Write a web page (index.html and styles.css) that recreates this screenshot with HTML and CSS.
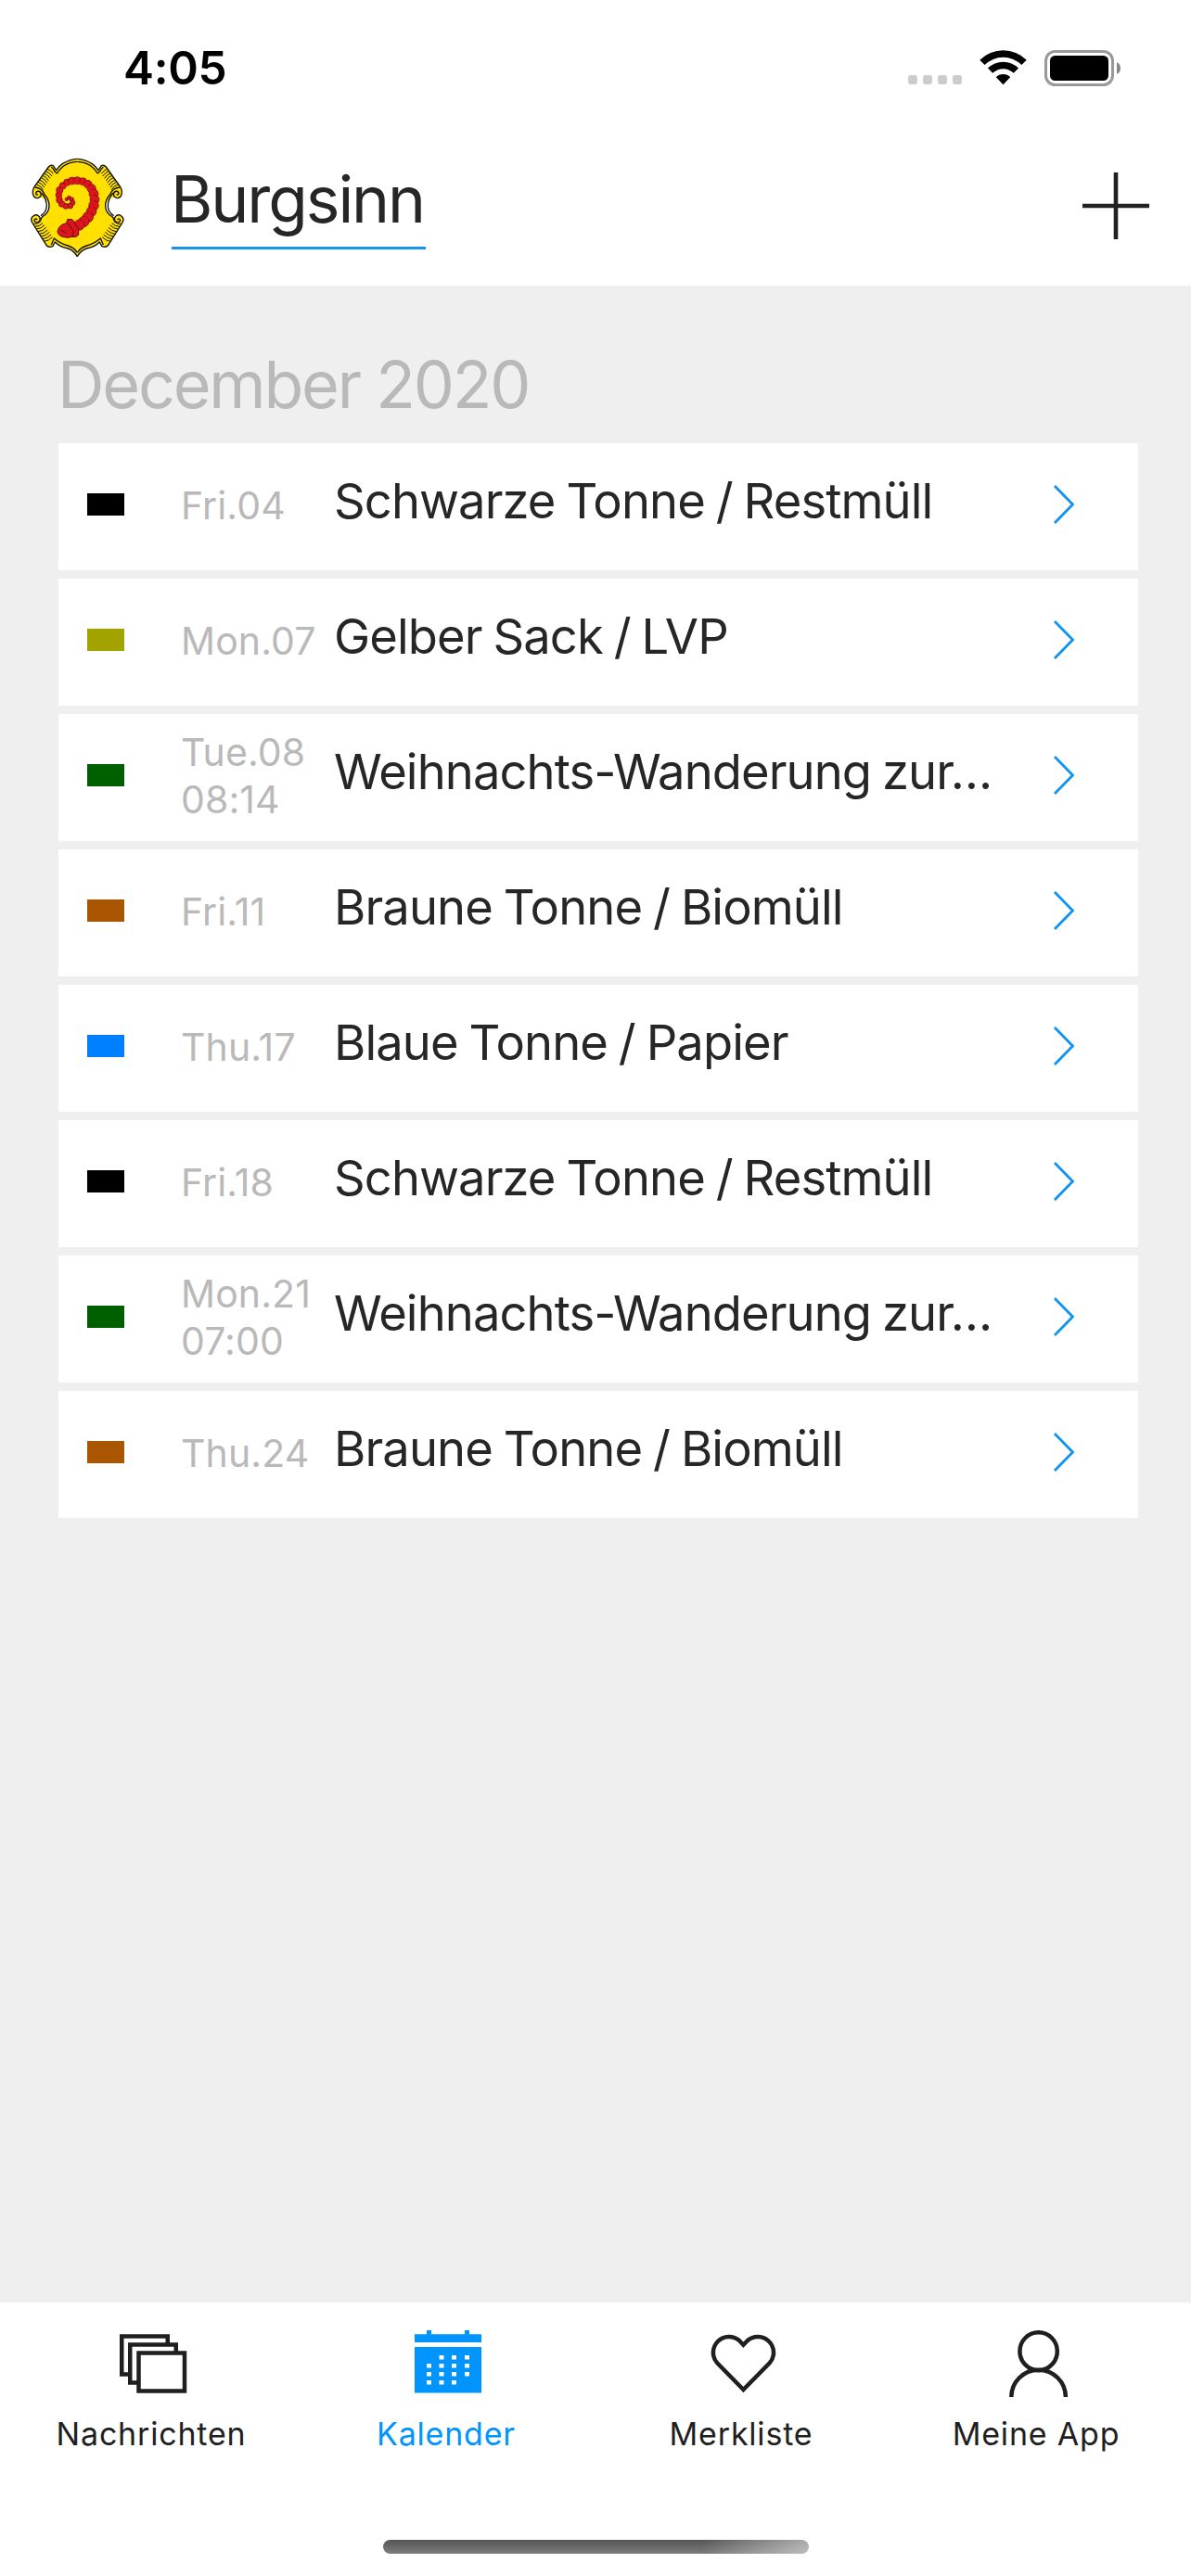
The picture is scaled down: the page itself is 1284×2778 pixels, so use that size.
FILE: index.html
```html
<!DOCTYPE html>
<html lang="de">
<head>
    <meta charset="UTF-8">
    <meta name="viewport" content="width=device-width, initial-scale=1.0">
    <title>Burgsinn - Kalender</title>
    <link rel="stylesheet" href="styles.css">
</head>
<body>

<header class="header">
    <div class="statusbar">
        <span class="time">4:05</span>
        <div class="status-icons">
            <div class="signal"><i></i><i></i><i></i><i></i></div>
            <svg class="wifi" viewBox="0 0 51 38">
                <path d="M0.3 10.8 A35.6 35.6 0 0 1 50.7 10.8 L45.4 16.1 A28.1 28.1 0 0 0 5.6 16.1Z"/>
                <path d="M9 19.6 A23.3 23.3 0 0 1 42 19.6 L36.8 24.8 A16 16 0 0 0 14.2 24.8Z"/>
                <path d="M17.8 29.2 A11 11 0 0 1 33.2 29.2 L25.5 37.3Z"/>
            </svg>
            <svg class="battery" viewBox="0 0 83 39">
                <rect x="1.5" y="1.5" width="72" height="36" rx="10" fill="none" stroke="#999" stroke-width="3"/>
                <rect x="6" y="6" width="63" height="27" rx="5.5"/>
                <path d="M78 13 Q82 15 82 19.5 Q82 24 78 26Z" fill="#888"/>
            </svg>
        </div>
    </div>

    <div class="appbar">
        <!-- Wappen -->
        <svg class="crest" viewBox="0 0 375 375">
            <defs>
                <g id="half">
                    <path d="M190 34 Q165 35 142 50 Q130 58 122 71 L112 56 Q104 52 97 60 L50 126 Q42 142 48 154 Q58 164 69 158 L84 162 Q98 174 98 187 Q97 205 78 219 L68 226 Q56 212 44 222 Q38 232 46 242 L88 310 Q96 322 110 316 L118 303 Q132 318 160 324 Q180 330 190 350Z" fill="#ffe000" stroke="none"/>
                    <path d="M190 34 Q165 35 142 50 Q130 58 122 71 L112 56 Q104 52 97 60 L50 126"/>
                    <path d="M190 43 Q165 44 146 57 Q132 68 124 81 Q116 76 112 66 L106 61"/>
                    <path d="M50 126 C40 146 50 164 64 160 C78 155 73 137 61 139 C52 142 57 153 63 149"/>
                    <path d="M53 126 Q76 128 84 149 Q99 164 99 187 Q98 210 78 220 Q72 226 71 234"/>
                    <path d="M74 144 Q91 164 91 187 Q90 207 72 218"/>
                    <path d="M44 240 C34 222 56 208 67 221 C76 236 60 243 53 237 C47 229 58 225 60 231"/>
                    <path d="M44 240 L88 310 Q96 324 111 316 L118 303 Q132 318 160 324 Q180 331 190 350"/>
                    <path d="M106 312 L115 291 Q134 308 160 315 Q180 321 190 337"/>
                    <path stroke-width="3" d="M93 67 Q104 70 112 82 M88 74 Q100 78 108 90 M83 81 Q95 85 102 97 M78 88 Q90 92 97 105 M73 95 Q86 99 92 112 M68 102 Q80 106 88 120 M63 109 Q76 113 83 127 M58 117 Q72 120 79 134"/>
                    <path stroke-width="3" d="M48 245 Q62 246 72 236 M53 253 Q68 253 78 242 M58 261 Q74 260 84 248 M63 269 Q79 268 89 256 M68 277 Q84 275 94 264 M73 285 Q89 283 100 271 M78 293 Q94 291 105 279 M83 301 Q99 299 109 287"/>
                </g>
            </defs>
            <g fill="none" stroke="#111" stroke-width="4" stroke-linejoin="round">
                <use href="#half"/>
                <use href="#half" transform="translate(380 0) scale(-1 1)"/>
            </g>
            <rect x="186" y="48" width="8" height="268" fill="#ffe000"/>
            <g fill="#dd141d" stroke="#5d0d0d" stroke-width="2">
                <circle cx="155" cy="165" r="5"/>
                <circle cx="163" cy="160" r="6"/>
                <circle cx="172" cy="165" r="7"/>
                <circle cx="175" cy="176" r="8"/>
                <circle cx="167" cy="186" r="9"/>
                <circle cx="153" cy="187" r="9"/>
                <circle cx="140" cy="180" r="10"/>
                <circle cx="132" cy="167" r="10"/>
                <circle cx="130" cy="151" r="10"/>
                <circle cx="133" cy="135" r="11"/>
                <circle cx="143" cy="121" r="11"/>
                <circle cx="157" cy="110" r="11"/>
                <circle cx="173" cy="105" r="12"/>
                <circle cx="190" cy="104" r="12"/>
                <circle cx="208" cy="107" r="12"/>
                <circle cx="224" cy="116" r="13"/>
                <circle cx="236" cy="130" r="14"/>
                <circle cx="243" cy="147" r="15"/>
                <circle cx="246" cy="166" r="15"/>
                <circle cx="243" cy="185" r="16"/>
                <circle cx="236" cy="204" r="16"/>
                <circle cx="225" cy="222" r="17"/>
                <circle cx="211" cy="237" r="17"/>
                <circle cx="196" cy="248" r="17"/>
                <path d="M154 187 C126 183 123 133 158 117 C200 98 238 125 240 165 C239 200 220 228 196 244" fill="none" stroke="#dd141d" stroke-width="7"/>
                <path stroke-width="3" d="M126 268 Q131 246 155 242 L158 230 Q176 226 180 238 Q184 252 194 260 L194 280 Q186 290 174 286 Q160 292 142 286 Q127 282 126 268Z"/>
                <path stroke-width="3" fill="none" d="M155 242 Q168 244 170 258 L178 268 L174 286 M136 264 L154 274"/>
            </g>
        </svg>
        <div class="town">Burgsinn</div>
        <svg class="plus" viewBox="0 0 72 72">
            <path d="M36 0V72M0 36H72" stroke="#222" stroke-width="4.6"/>
        </svg>
    </div>
</header>

<main class="content">
    <h1 class="month">December 2020</h1>

    <div class="list">
        <div class="row">
            <span class="color black"></span>
            <span class="date">Fri.04</span>
            <span class="title">Schwarze Tonne / Restmüll</span>
            <svg class="chevron" viewBox="0 0 22 42"><path d="M1 1L20.5 21L1 41"/></svg>
        </div>
        <div class="row">
            <span class="color yellow"></span>
            <span class="date">Mon.07</span>
            <span class="title">Gelber Sack / LVP</span>
            <svg class="chevron" viewBox="0 0 22 42"><path d="M1 1L20.5 21L1 41"/></svg>
        </div>
        <div class="row">
            <span class="color green"></span>
            <span class="date">Tue.08<br>08:14</span>
            <span class="title">Weihnachts-Wanderung zur…</span>
            <svg class="chevron" viewBox="0 0 22 42"><path d="M1 1L20.5 21L1 41"/></svg>
        </div>
        <div class="row">
            <span class="color brown"></span>
            <span class="date">Fri.11</span>
            <span class="title">Braune Tonne / Biomüll</span>
            <svg class="chevron" viewBox="0 0 22 42"><path d="M1 1L20.5 21L1 41"/></svg>
        </div>
        <div class="row">
            <span class="color blue"></span>
            <span class="date">Thu.17</span>
            <span class="title">Blaue Tonne / Papier</span>
            <svg class="chevron" viewBox="0 0 22 42"><path d="M1 1L20.5 21L1 41"/></svg>
        </div>
        <div class="row">
            <span class="color black"></span>
            <span class="date">Fri.18</span>
            <span class="title">Schwarze Tonne / Restmüll</span>
            <svg class="chevron" viewBox="0 0 22 42"><path d="M1 1L20.5 21L1 41"/></svg>
        </div>
        <div class="row">
            <span class="color green"></span>
            <span class="date">Mon.21<br>07:00</span>
            <span class="title">Weihnachts-Wanderung zur…</span>
            <svg class="chevron" viewBox="0 0 22 42"><path d="M1 1L20.5 21L1 41"/></svg>
        </div>
        <div class="row">
            <span class="color brown"></span>
            <span class="date">Thu.24</span>
            <span class="title">Braune Tonne / Biomüll</span>
            <svg class="chevron" viewBox="0 0 22 42"><path d="M1 1L20.5 21L1 41"/></svg>
        </div>
    </div>
</main>

<footer class="footer">
    <nav class="tabs">
        <a class="tab">
            <svg class="tab-icon" viewBox="0 0 76 76">
                <g fill="#fff" stroke="currentColor" stroke-width="4.5">
                    <rect x="4.25" y="9.5" width="49.5" height="41"/>
                    <rect x="13.25" y="18.5" width="49.5" height="41"/>
                    <rect x="22.5" y="27.5" width="49.5" height="41"/>
                </g>
            </svg>
            <span>Nachrichten</span>
        </a>
        <a class="tab active">
            <svg class="tab-icon" viewBox="0 0 76 76">
                <path fill="currentColor" d="M2 7.3H15V3H20V7.3H56V3H61V7.3H74V16H2ZM2 21H74V70.5H2Z"/>
                <path fill="#fff" d="M28.5 30h5v4.6h-5zM42 30h5v4.6h-5zM56 30h5v4.6h-5zM15 39h5v4.6h-5zM28.5 39h5v4.6h-5zM42 39h5v4.6h-5zM56 39h5v4.6h-5zM15 48h5v4.6h-5zM28.5 48h5v4.6h-5zM42 48h5v4.6h-5zM56 48h5v4.6h-5zM15 57h5v4.6h-5zM28.5 57h5v4.6h-5zM42 57h5v4.6h-5z"/>
            </svg>
            <span>Kalender</span>
        </a>
        <a class="tab">
            <svg class="tab-icon" viewBox="0 0 76 76">
                <path fill="none" stroke="currentColor" stroke-width="4.5" d="M38.4 67L10.2 38.3A17 17 0 0 1 34.2 14.3L38.4 18.8L42.7 14.3A17 17 0 0 1 66.7 38.3Z"/>
            </svg>
            <span>Merkliste</span>
        </a>
        <a class="tab">
            <svg class="tab-icon" viewBox="0 0 76 76">
                <g fill="none" stroke="currentColor" stroke-width="4.5">
                    <ellipse cx="38.6" cy="25.7" rx="20.2" ry="20.5"/>
                    <path d="M9.3 75A29.3 29.3 0 0 1 67.9 75"/>
                </g>
            </svg>
            <span>Meine App</span>
        </a>
    </nav>
    <div class="home-indicator"></div>
</footer>

</body>
</html>
```

FILE: styles.css
```css
* {
    box-sizing: border-box;
}

body {
    margin: 0;
    height: 2778px;
    display: flex;
    flex-direction: column;
    font-family: Inter, "Liberation Sans", sans-serif;
    background-color: #efefef;
    color: #262626;
}

svg {
    display: block;
    flex: none;
}

/* Header */
.header {
    height: 308px;
    background-color: #fff;
}

.statusbar {
    height: 146px;
    padding: 0 75px 0 133px;
    display: flex;
    align-items: center;
    justify-content: space-between;
}

.time {
    font-size: 49.5px;
    font-weight: 600;
    line-height: 60px;
    letter-spacing: -0.3px;
    color: #000;
}

.status-icons {
    display: flex;
    align-items: center;
}

.signal {
    display: flex;
    gap: 6px;
    margin: 26px 19px 0 0;
}

.signal i {
    width: 10px;
    height: 10px;
    border-radius: 3px;
    background-color: #ccc;
}

.wifi {
    width: 51px;
    height: 38px;
    margin-right: 19px;
}

.battery {
    width: 83px;
    height: 39px;
}

.appbar {
    display: flex;
    align-items: flex-start;
    padding: 14px 45px 0 20px;
}

.crest {
    width: 125px;
    height: 125px;
}

.town {
    width: 274px;
    margin: 15px auto 0 40px;
    padding-bottom: 11px;
    border-bottom: 3px solid #1893ec;
    font-size: 69.5px;
    line-height: 80px;
    letter-spacing: -2.1px;
    text-indent: -1px;
    white-space: nowrap;
}

.plus {
    width: 72px;
    height: 72px;
    margin-top: 26px;
}

/* Kalender */
.content {
    flex: 1;
    padding: 65px 57px 0 63px;
}

.month {
    margin: 0 0 21px -1px;
    font-size: 70px;
    font-weight: 400;
    line-height: 84px;
    letter-spacing: -2.2px;
    color: #b9b9b9;
}

.list {
    display: flex;
    flex-direction: column;
    gap: 9px;
}

.row {
    display: grid;
    grid-template-columns: 101px 165px 1fr 22px;
    align-items: center;
    height: 137px;
    padding: 0 69px 5px 31px;
    background-color: #fff;
}

.color {
    width: 40px;
    height: 24px;
}

.black { background-color: #000; }
.yellow { background-color: #a3a300; }
.green { background-color: #005f00; }
.brown { background-color: #aa5500; }
.blue { background-color: #0080ff; }

.date {
    font-size: 41px;
    line-height: 51px;
    letter-spacing: 0.1px;
    padding-top: 2px;
    color: #b9b9b9;
}

.title {
    font-size: 52.5px;
    line-height: 64px;
    letter-spacing: -0.9px;
    word-spacing: -2px;
    padding-bottom: 9px;
    white-space: nowrap;
}

.chevron {
    width: 22px;
    height: 42px;
    fill: none;
    stroke: #0f93f5;
    stroke-width: 2.8;
}

/* Tabs */
.footer {
    height: 295px;
    background-color: #fff;
    display: flex;
    flex-direction: column;
    justify-content: space-between;
    padding: 27px 8px 24px 4px;
}

.tabs {
    display: grid;
    grid-template-columns: repeat(4, 1fr);
}

.tab {
    display: flex;
    flex-direction: column;
    align-items: center;
    gap: 19px;
    font-size: 34px;
    line-height: 40px;
    letter-spacing: 0.8px;
    color: #1f1f1f;
}

.tab-icon {
    width: 76px;
    height: 76px;
    margin-left: 4px;
}

.active {
    color: #0094ff;
}

.home-indicator {
    width: 459px;
    height: 15px;
    margin-left: 409px;
    border-radius: 8px;
    background: linear-gradient(to right, transparent 75%, rgba(255, 255, 255, 0.5)), linear-gradient(#555, #7c7c7c);
}
```
